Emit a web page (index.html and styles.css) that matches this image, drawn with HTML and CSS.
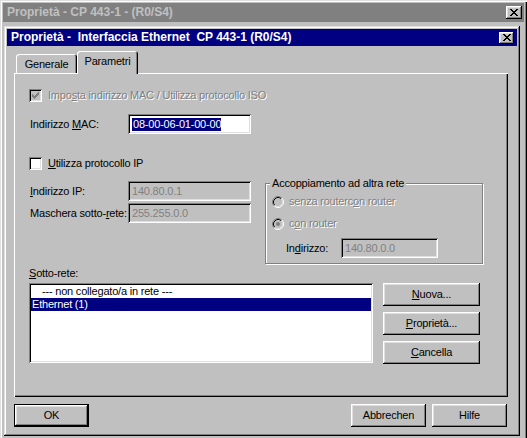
FILE: index.html
```html
<!DOCTYPE html>
<html lang="it">
<head>
<meta charset="utf-8">
<title>Proprietà - CP 443-1 - (R0/S4)</title>
<link rel="stylesheet" href="styles.css">
</head>
<body>
<div class="outer">
  <div class="caption caption-inactive">
    <span class="caption-text">Proprietà - CP 443-1 - (R0/S4)</span>
    <span class="capbtn"><svg width="8" height="7" viewBox="0 0 8 7" shape-rendering="crispEdges"><path fill="#000" d="M0 0h2v1h-2zM6 0h2v1h-2zM1 1h2v1h-2zM5 1h2v1h-2zM2 2h4v1h-4zM3 3h2v1h-2zM2 4h4v1h-4zM1 5h2v1h-2zM5 5h2v1h-2zM0 6h2v1h-2zM6 6h2v1h-2z"/></svg></span>
  </div>
  <div class="outer-client">
    <div class="dialog">
      <div class="caption caption-active">
        <span class="caption-text">Proprietà -  Interfaccia Ethernet  CP 443-1 (R0/S4)</span>
        <span class="capbtn capbtn-small"><svg width="8" height="7" viewBox="0 0 8 7" shape-rendering="crispEdges"><path fill="#000" d="M0 0h2v1h-2zM6 0h2v1h-2zM1 1h2v1h-2zM5 1h2v1h-2zM2 2h4v1h-4zM3 3h2v1h-2zM2 4h4v1h-4zM1 5h2v1h-2zM5 5h2v1h-2zM0 6h2v1h-2zM6 6h2v1h-2z"/></svg></span>
      </div>
      <div class="dlg-body">
        <div class="tabs">
          <div class="tab">Generale</div>
          <div class="tab tab-active">Parametri</div>
        </div>
        <div class="panel">
          <div class="row chk-row">
            <span class="chk chk-disabled"><svg width="7" height="7" viewBox="0 0 7 7" shape-rendering="crispEdges"><path fill="#808080" d="M6 0h1v1h-1zM5 1h2v1h-2zM0 2h1v1h-1zM4 2h3v1h-3zM0 3h2v1h-2zM3 3h3v1h-3zM0 4h5v1h-5zM1 5h3v1h-3zM2 6h1v1h-1z"/></svg></span>
            <span class="etched">Impo<u>s</u>ta indirizzo MAC / Utilizza protocollo ISO</span>
          </div>
          <div class="field-row mac-row">
            <span class="lbl">Indirizzo <u>M</u>AC:</span>
            <span class="edit"><span class="sel">08-00-06-01-00-00</span></span>
          </div>
          <div class="row chk-row ip-chk">
            <span class="chk"></span>
            <span><u>U</u>tilizza protocollo IP</span>
          </div>
          <div class="net-row">
            <div class="ip-col">
              <div class="field-row"><span class="lbl"><u>I</u>ndirizzo IP:</span><span class="edit edit-disabled">140.80.0.1</span></div>
              <div class="field-row"><span class="lbl">Maschera sotto-<u>r</u>ete:</span><span class="edit edit-disabled">255.255.0.0</span></div>
            </div>
            <div class="group">
              <span class="group-title">Accoppiamento ad altra rete</span>
              <div class="radio-row r1">
                <span class="radio"><svg width="12" height="12" viewBox="0 0 12 12"><circle cx="6" cy="6" r="4.5" fill="#c0c0c0"/><path d="M2.11 9.89A5.5 5.5 0 0 1 9.89 2.11" fill="none" stroke="#808080"/><path d="M9.89 2.11A5.5 5.5 0 0 1 2.11 9.89" fill="none" stroke="#fff"/><path d="M2.82 9.18A4.5 4.5 0 0 1 9.18 2.82" fill="none" stroke="#000"/><path d="M9.18 2.82A4.5 4.5 0 0 1 2.82 9.18" fill="none" stroke="#dfdfdf"/></svg></span>
                <span class="etched">senza routerc<u>o</u>n router</span>
              </div>
              <div class="radio-row r2">
                <span class="radio"><svg width="12" height="12" viewBox="0 0 12 12"><circle cx="6" cy="6" r="4.5" fill="#c0c0c0"/><path d="M2.11 9.89A5.5 5.5 0 0 1 9.89 2.11" fill="none" stroke="#808080"/><path d="M9.89 2.11A5.5 5.5 0 0 1 2.11 9.89" fill="none" stroke="#fff"/><path d="M2.82 9.18A4.5 4.5 0 0 1 9.18 2.82" fill="none" stroke="#000"/><path d="M9.18 2.82A4.5 4.5 0 0 1 2.82 9.18" fill="none" stroke="#dfdfdf"/><circle cx="6" cy="6" r="2" fill="#808080"/></svg></span>
                <span class="etched">c<u>o</u>n router</span>
              </div>
              <div class="field-row addr-row">
                <span class="lbl lbl-addr">In<u>d</u>irizzo:</span>
                <span class="edit edit-disabled edit-addr">140.80.0.0</span>
              </div>
            </div>
          </div>
          <div class="sub-lbl"><u>S</u>otto-rete:</div>
          <div class="sub-row">
            <div class="listbox">
              <div class="item item-indent">--- non collegato/a in rete ---</div>
              <div class="item item-selected">Ethernet (1)</div>
            </div>
            <div class="side-btns">
              <button class="btn"><u>N</u>uova...</button>
              <button class="btn"><u>P</u>roprietà...</button>
              <button class="btn"><u>C</u>ancella</button>
            </div>
          </div>
        </div>
        <div class="dlg-btns">
          <button class="btn btn-default">OK</button>
          <span class="spacer"></span>
          <button class="btn">Abbrechen</button>
          <button class="btn">Hilfe</button>
        </div>
      </div>
    </div>
  </div>
</div>
</body>
</html>
```

FILE: styles.css
```css
* { box-sizing: border-box; }
html, body { margin: 0; padding: 0; }
body {
  width: 527px;
  height: 438px;
  overflow: hidden;
  background: #c0c0c0;
  font-family: "Liberation Sans", Arial, sans-serif;
  font-size: 11px;
  line-height: 13px;
  letter-spacing: -0.2px;
  color: #000;
}
u { text-decoration: underline; text-underline-offset: 1px; }

.outer {
  height: 438px;
  padding: 3px 3px 0;
  box-shadow: inset 1px 1px 0 #dfdfdf, inset 2px 2px 0 #fff, inset -1px 0 0 #000, inset -2px 0 0 #808080;
}

.caption {
  display: flex;
  align-items: center;
  justify-content: space-between;
  font-size: 12px;
  font-weight: bold;
  white-space: pre;
  letter-spacing: 0;
}
.caption-inactive { height: 19px; background: #808080; color: #c0c0c0; padding: 0 2px 0 4px; }
.caption-active { height: 17px; background: #000080; color: #fff; padding: 0 3px 0 4px; }

.capbtn {
  width: 16px;
  height: 13px;
  background: #c0c0c0;
  box-shadow: inset -1px -1px 0 #000, inset 1px 1px 0 #fff, inset -2px -2px 0 #808080, inset 2px 2px 0 #dfdfdf;
  display: flex;
  align-items: center;
  justify-content: center;
}
.capbtn-small { width: 15px; height: 12px; }

.outer-client { padding: 4px 0 0 1px; }

.dialog {
  width: 516px;
  height: 410px;
  padding: 3px;
  background: #c0c0c0;
  box-shadow: inset -1px -1px 0 #000, inset 1px 1px 0 #dfdfdf, inset -2px -2px 0 #808080, inset 2px 2px 0 #fff;
}

.dlg-body { padding: 5px 9px 0 7px; }

.tabs {
  display: flex;
  align-items: flex-end;
  height: 22px;
  padding-left: 2px;
}
.tab {
  width: 61px;
  height: 19px;
  padding-top: 4px;
  text-align: center;
  background: #c0c0c0;
  border-radius: 3px 3px 0 0;
  box-shadow: inset 1px 1px 0 #fff, inset -1px 0 0 #000, inset -2px 0 0 #808080;
}
.tab-active {
  position: relative;
  z-index: 1;
  height: 23px;
  margin-bottom: -1px;
  padding-top: 4px;
}

.panel {
  height: 324px;
  padding: 16px 0 0 15px;
  box-shadow: inset 1px 1px 0 #fff, inset -1px -1px 0 #000, inset -2px -2px 0 #808080;
}

.row { display: flex; align-items: center; }
.chk-row { height: 13px; }
.chk {
  flex: none;
  width: 13px;
  height: 13px;
  margin-right: 6px;
  background: #fff;
  display: flex;
  align-items: center;
  justify-content: center;
  box-shadow: inset 1px 1px 0 #808080, inset -1px -1px 0 #fff, inset 2px 2px 0 #000, inset -2px -2px 0 #dfdfdf;
}
.chk-disabled { background: #c0c0c0; }
.etched { color: #808080; text-shadow: 1px 1px 0 #fff; }

.field-row { display: flex; align-items: center; height: 20px; }
.mac-row { margin-top: 12px; }
.lbl { flex: none; width: 99px; padding-left: 1px; white-space: nowrap; }
.edit {
  flex: none;
  width: 123px;
  height: 20px;
  padding: 0 2px 0 4px;
  display: flex;
  align-items: center;
  background: #fff;
  white-space: nowrap;
  box-shadow: inset 1px 1px 0 #808080, inset -1px -1px 0 #fff, inset 2px 2px 0 #000, inset -2px -2px 0 #dfdfdf;
}
.edit-disabled { background: #c0c0c0; color: #808080; }
.sel { background: #000080; color: #fff; height: 13px; padding-left: 1px; }

.ip-chk { margin-top: 23px; }

.net-row { display: flex; align-items: flex-start; margin-top: 11px; }
.ip-col { display: flex; flex-direction: column; gap: 2px; }

.group {
  width: 218px;
  height: 81px;
  margin: 2px 0 0 14px;
  padding-left: 6px;
  display: flex;
  flex-direction: column;
  border: 1px solid #808080;
  box-shadow: inset 1px 1px 0 #fff, 1px 1px 0 #fff;
}
.group-title {
  align-self: flex-start;
  margin: -7px 0 0 -2px;
  padding: 0 2px;
  background: #c0c0c0;
}
.radio-row { display: flex; align-items: center; height: 13px; }
.radio { flex: none; width: 12px; height: 12px; margin-right: 5px; display: flex; }
.r1 { margin-top: 5px; }
.r2 { margin-top: 9px; }
.addr-row { margin-top: 8px; }
.lbl-addr { width: 56px; margin-left: 13px; }
.edit-addr { width: 97px; }

.sub-lbl { margin-top: 3px; height: 13px; }
.sub-row { display: flex; align-items: flex-start; margin-top: 3px; }
.listbox {
  width: 344px;
  height: 80px;
  padding: 2px;
  background: #fff;
  box-shadow: inset 1px 1px 0 #808080, inset -1px -1px 0 #fff, inset 2px 2px 0 #000, inset -2px -2px 0 #dfdfdf;
}
.item { height: 13px; padding-left: 1px; white-space: nowrap; }
.item-indent { padding-left: 11px; }
.item-selected { background: #000080; color: #fff; }

.side-btns { display: flex; flex-direction: column; gap: 6px; margin-left: 10px; }
.side-btns .btn { width: 97px; }

.btn {
  width: 75px;
  height: 23px;
  padding: 0;
  border: 0;
  font: inherit;
  letter-spacing: inherit;
  color: #000;
  background: #c0c0c0;
  box-shadow: inset -1px -1px 0 #000, inset 1px 1px 0 #fff, inset -2px -2px 0 #808080, inset 2px 2px 0 #dfdfdf;
}
.btn-default { border: 1px solid #000; }

.dlg-btns { display: flex; gap: 6px; margin-top: 7px; padding-right: 1px; }
.spacer { flex: 1; }
```
